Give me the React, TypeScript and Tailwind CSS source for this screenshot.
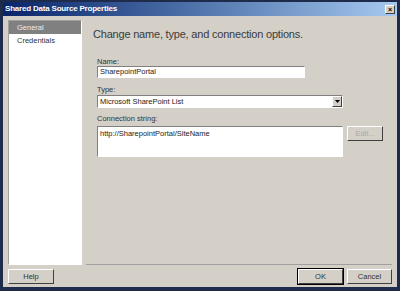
const FONT = { fontFamily: '"Liberation Sans", Arial, sans-serif' }

function Btn({ label, disabled = false, primary = false, className = '' }: { label: string; disabled?: boolean; primary?: boolean; className?: string }) {
  return (
    <button
      type="button"
      className={`flex h-[15px] items-center justify-center border border-t-white border-l-white border-r-[#404040] border-b-[#404040] bg-[#d4d0c8] text-[7.5px] leading-none ${
        disabled ? 'text-[#a8a8a8]' : 'text-[#333]'
      } ${primary ? 'outline outline-1 outline-[#000]' : ''} ${className}`}
    >
      {label}
    </button>
  )
}

export default function App() {
  return (
    <div className="h-[291px] w-[400px] overflow-hidden bg-[#1e2b4a] px-[3px] pt-[2px] pb-[4px]" style={FONT}>
      <div className="flex h-full flex-col bg-[#d4d0c8]">
        {/* Title bar */}
        <div className="flex h-[14px] shrink-0 items-center justify-between bg-gradient-to-r from-[#0a246a] to-[#a6caf0] pl-[2px] pr-[2px]">
          <span className="text-[8px] font-bold leading-none tracking-[-0.2px] text-white">Shared Data Source Properties</span>
          <span className="flex h-[9px] w-[10px] items-center justify-center border border-t-white border-l-white border-r-[#404040] border-b-[#404040] bg-[#d4d0c8] text-[7px] font-bold leading-none text-black">
            ×
          </span>
        </div>

        <div className="flex flex-1 flex-col px-[5px] pt-[4px]">
          <div className="flex h-[245px]">
            {/* Left nav */}
            <div className="flex w-[74px] flex-col border border-[#a0a0a0] border-b-white border-r-white bg-white">
              <div className="flex h-[13px] items-center bg-[#808080] px-[8px] text-[7.5px] text-[#eee]">General</div>
              <div className="flex h-[13px] items-center px-[8px] text-[7.5px] text-[#333]">Credentials</div>
            </div>

            {/* Right content */}
            <div className="ml-[4px] flex flex-1 flex-col border-b border-b-[#a0a0a0] pl-[7px]">
              <div className="mt-[8px] text-[11px] leading-[13px] tracking-[-0.2px] text-[#3a3a3a]">
                Change name, type, and connection options.
              </div>

              <div className="ml-[4px] mt-[16px] flex flex-col">
                <div className="text-[7.5px] leading-[9px] text-[#333]">Name:</div>
                <div className="flex h-[12px] w-[208px] items-center border border-t-[#808080] border-l-[#808080] border-r-white border-b-white bg-white px-[2px] text-[7.5px] text-[#222]">
                  SharepointPortal
                </div>

                <div className="mt-[7px] text-[7.5px] leading-[9px] text-[#333]">Type:</div>
                <div className="mt-[1px] flex h-[13px] w-[246px] items-center justify-between border border-t-[#808080] border-l-[#808080] border-r-white border-b-white bg-white pl-[2px] text-[7.5px] text-[#222]">
                  <span>Microsoft SharePoint List</span>
                  <span className="flex h-[11px] w-[10px] items-center justify-center border border-t-white border-l-white border-r-[#404040] border-b-[#404040] bg-[#d4d0c8]">
                    <svg width="5" height="3" viewBox="0 0 5 3">
                      <path d="M0 0h5L2.5 3z" fill="#000" />
                    </svg>
                  </span>
                </div>

                <div className="mt-[6px] text-[7.5px] leading-[9px] text-[#333]">Connection string:</div>
                <div className="mt-[3px] flex items-start gap-[4px]">
                  <div className="h-[31px] w-[246px] border border-t-[#808080] border-l-[#808080] border-r-white border-b-white bg-white px-[2px] pt-[1px] text-[7.5px] text-[#222]">
                    http://SharepointPortal/SiteName
                  </div>
                  <Btn label="Edit..." disabled className="h-[14px] w-[36px]" />
                </div>
              </div>
            </div>
          </div>

          {/* Bottom buttons */}
          <div className="flex flex-1 items-center justify-between pt-[1px]">
            <Btn label="Help" className="w-[46px]" />
            <div className="flex gap-[4px]">
              <Btn label="OK" primary className="w-[45px]" />
              <Btn label="Cancel" className="w-[45px]" />
            </div>
          </div>
        </div>
      </div>
    </div>
  )
}
